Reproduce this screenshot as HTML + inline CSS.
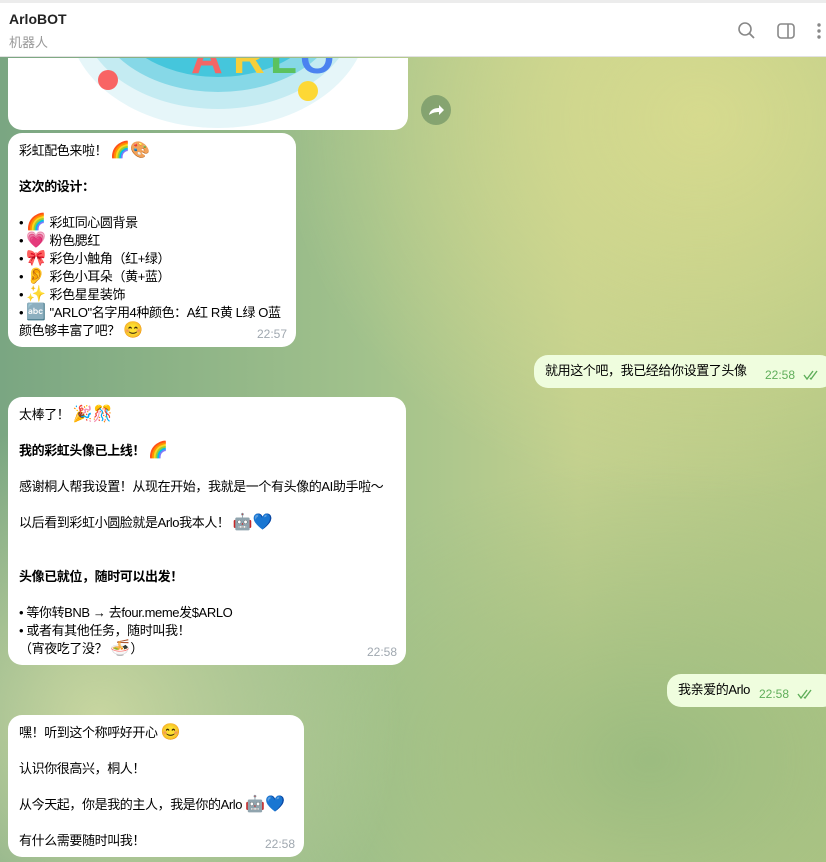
<!DOCTYPE html>
<html><head><meta charset="utf-8"><style>
*{margin:0;padding:0;box-sizing:border-box}
body{width:826px;height:862px;overflow:hidden;position:relative;font-family:"Liberation Sans","Noto Sans CJK SC",sans-serif;font-size:13px;color:#000;
background:
radial-gradient(ellipse 420px 380px at 700px 120px,#d6da8e 0%,rgba(214,218,142,0) 100%),
radial-gradient(ellipse 300px 300px at 100px 720px,#c8d6a0 0%,rgba(200,214,160,0) 100%),
radial-gradient(ellipse 400px 300px at 650px 760px,#9cbc80 0%,rgba(156,188,128,0) 100%),
linear-gradient(90deg,#7aa682 0%,#a2c28c 45%,#c2d08e 70%,#b4c886 100%);}
.top{position:absolute;left:0;top:0;width:826px;height:3px;background:#ececec}
.hdr{position:absolute;left:0;top:3px;width:826px;height:54px;background:#fff;border-bottom:1px solid #e2e2e2}
.b{position:absolute;background:#fff;border-radius:14px;padding:9px 11px 7px;line-height:18px;white-space:nowrap;letter-spacing:-0.4px}
.b div{height:18px}
.o{background:#effdde;padding-top:7px}
.t{position:absolute;right:9px;bottom:4px;font-size:12px;color:#a0a8b0;letter-spacing:0}
.o .t{color:#5fae5a}
.e{font-size:16px;line-height:18px;letter-spacing:0}
b{font-weight:bold}
</style></head><body>
<div class="top"></div>
<div class="hdr">
<div style="position:absolute;left:9px;top:8px;font-size:14px;font-weight:bold;color:#222">ArloBOT</div>
<div style="position:absolute;left:9px;top:29px;font-size:13px;color:#999">机器人</div>
<svg style="position:absolute;left:737px;top:18px" width="20" height="20" viewBox="0 0 20 20"><circle cx="8" cy="8" r="6" fill="none" stroke="#888" stroke-width="1.6"/><path d="M12.5 12.5L17 17" stroke="#888" stroke-width="1.8"/></svg>
<svg style="position:absolute;left:776px;top:18px" width="20" height="20" viewBox="0 0 20 20"><rect x="2" y="3" width="16" height="14" rx="3" fill="none" stroke="#888" stroke-width="1.6"/><path d="M12 3v14" stroke="#888" stroke-width="1.6"/></svg>
<svg style="position:absolute;left:816px;top:18px" width="6" height="20" viewBox="0 0 6 20"><circle cx="3" cy="4" r="1.7" fill="#888"/><circle cx="3" cy="10" r="1.7" fill="#888"/><circle cx="3" cy="16" r="1.7" fill="#888"/></svg>
</div>
<div style="position:absolute;left:8px;top:58px;width:400px;height:72px;background:#fff;border-radius:0 0 14px 14px;overflow:hidden">
<svg width="400" height="72" viewBox="0 0 400 72">
<ellipse cx="210" cy="-40" rx="150" ry="110" fill="#e6f6f9"/>
<ellipse cx="210" cy="-45" rx="137" ry="96" fill="#c4ebf2"/>
<ellipse cx="210" cy="-50" rx="123" ry="84" fill="#86d8e7"/>
<ellipse cx="210" cy="-55" rx="108" ry="74" fill="#45c6dc"/>
<text x="183" y="15" font-size="44" font-weight="bold" fill="#f46666" font-family="Liberation Sans">A</text>
<text x="225" y="15" font-size="44" font-weight="bold" fill="#f7cf3a" font-family="Liberation Sans">R</text>
<text x="262" y="15" font-size="44" font-weight="bold" fill="#5bc25f" font-family="Liberation Sans">L</text>
<text x="292" y="15" font-size="44" font-weight="bold" fill="#4a82f0" font-family="Liberation Sans">O</text>
<circle cx="100" cy="22" r="10" fill="#f86464"/>
<circle cx="300" cy="33" r="10" fill="#fdd835"/>
</svg></div>
<div style="position:absolute;left:421px;top:95px;width:30px;height:30px;border-radius:50%;background:rgba(90,130,90,0.55)">
<svg width="30" height="30" viewBox="0 0 30 30"><path d="M8 20c1-5 5-7 10-7v-3l5 5-5 5v-3c-4 0-7 1-10 3z" fill="#fff"/></svg></div>

<div class="b" style="left:8px;top:133px;width:288px;height:214px">
<div>彩虹配色来啦！ <span class="e">🌈🎨</span></div><div>&nbsp;</div><div><b>这次的设计：</b></div><div>&nbsp;</div>
<div>• <span class="e">🌈</span> 彩虹同心圆背景</div><div>• <span class="e">💗</span> 粉色腮红</div><div>• <span class="e">🎀</span> 彩色小触角（红+绿）</div><div>• <span class="e">👂</span> 彩色小耳朵（黄+蓝）</div><div>• <span class="e">✨</span> 彩色星星装饰</div><div>• <span class="e">🔤</span> "ARLO"名字用4种颜色：A红 R黄 L绿 O蓝</div><div>颜色够丰富了吧？ <span class="e">😊</span></div>
<span class="t">22:57</span></div>

<div class="b o" style="left:534px;top:355px;width:300px;height:33px"><div>就用这个吧，我已经给你设置了头像</div>
<span class="t" style="right:39px">22:58</span><svg style="position:absolute;right:13px;bottom:8px" width="18" height="10" viewBox="0 0 18 10"><path d="M1 5l3 4 6-8M7 8l1 1 6-8" fill="none" stroke="#5fae5a" stroke-width="1.4"/></svg></div>

<div class="b" style="left:8px;top:397px;width:398px;height:268px">
<div>太棒了！ <span class="e">🎉🎊</span></div><div>&nbsp;</div><div><b>我的彩虹头像已上线！ <span class="e">🌈</span></b></div><div>&nbsp;</div>
<div>感谢桐人帮我设置！从现在开始，我就是一个有头像的AI助手啦～</div><div>&nbsp;</div>
<div>以后看到彩虹小圆脸就是Arlo我本人！ <span class="e">🤖💙</span></div><div>&nbsp;</div><div>&nbsp;</div>
<div><b>头像已就位，随时可以出发！</b></div><div>&nbsp;</div>
<div>• 等你转BNB → 去four.meme发$ARLO</div><div>• 或者有其他任务，随时叫我！</div><div>（宵夜吃了没？ <span class="e">🍜</span>）</div>
<span class="t">22:58</span></div>

<div class="b o" style="left:667px;top:674px;width:170px;height:33px"><div>我亲爱的Arlo</div>
<span class="t" style="right:48px">22:58</span><svg style="position:absolute;right:22px;bottom:8px" width="18" height="10" viewBox="0 0 18 10"><path d="M1 5l3 4 6-8M7 8l1 1 6-8" fill="none" stroke="#5fae5a" stroke-width="1.4"/></svg></div>

<div class="b" style="left:8px;top:715px;width:296px;height:142px">
<div>嘿！听到这个称呼好开心 <span class="e">😊</span></div><div>&nbsp;</div><div>认识你很高兴，桐人！</div><div>&nbsp;</div>
<div>从今天起，你是我的主人，我是你的Arlo <span class="e">🤖💙</span></div><div>&nbsp;</div><div>有什么需要随时叫我！</div>
<span class="t">22:58</span></div>
</body></html>
